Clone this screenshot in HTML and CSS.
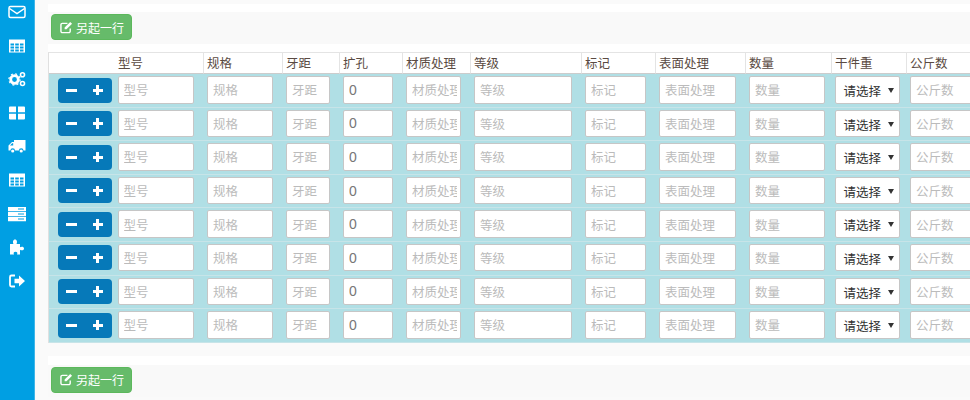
FILE: index.html
```html
<!DOCTYPE html>
<html lang="zh">
<head>
<meta charset="utf-8">
<title>订单</title>
<link rel="stylesheet" href="styles.css">
</head>
<body>
<div class="app">
  <nav class="side">
    <svg class="ic" viewBox="0 0 18 16"><rect x="1" y="2.500" width="16" height="11" rx="1.500" fill="none" stroke="#fff" stroke-width="1.500"/><path d="M1.500 4.500l7.500 5 7.500-5" fill="none" stroke="#fff" stroke-width="1.500"/></svg>
    <svg class="ic" viewBox="0 0 18 16"><path d="M1 1.500h16v13H1z M2.500 5.500v2h3.500v-2z M7.200 5.500v2h3.600v-2z M12 5.500v2h3.500v-2z M2.500 8.500v2h3.500v-2z M7.200 8.500v2h3.600v-2z M12 8.500v2h3.500v-2z M2.500 11.500v2h3.500v-2z M7.200 11.500v2h3.600v-2z M12 11.500v2h3.500v-2z" fill="#fff" fill-rule="evenodd"/></svg>
    <svg class="ic" viewBox="0 0 18 16"><circle cx="6.500" cy="8.500" r="3.800" fill="none" stroke="#fff" stroke-width="2.800"/><circle cx="6.500" cy="8.500" r="5.600" fill="none" stroke="#fff" stroke-width="1.200" stroke-dasharray="2 2.400"/><circle cx="14.500" cy="3.800" r="2" fill="none" stroke="#fff" stroke-width="1.600"/><circle cx="14.500" cy="12.500" r="2" fill="none" stroke="#fff" stroke-width="1.600"/></svg>
    <svg class="ic" viewBox="0 0 18 16"><path d="M1 2.500a1 1 0 0 1 1-1h6v5.800H1z M10 1.500h6a1 1 0 0 1 1 1v4.800h-7z M1 8.800h7v5.700H2a1 1 0 0 1-1-1z M10 8.800h7v4.700a1 1 0 0 1-1 1h-6z" fill="#fff"/></svg>
    <svg class="ic" viewBox="0 0 18 16"><path d="M6 2h11.500v10.500h-2a2.300 2.300 0 0 0-4.600 0H7a2.300 2.300 0 0 0-4.600 0H.5V7.500L4 4h2z M2 7.500h3.200V5.200H4.200z" fill="#fff" fill-rule="evenodd"/><circle cx="4.700" cy="13" r="1.600" fill="#fff"/><circle cx="13.200" cy="13" r="1.600" fill="#fff"/></svg>
    <svg class="ic" viewBox="0 0 18 16"><path d="M1 1.500h16v13H1z M2.500 5.500v2h3.500v-2z M7.200 5.500v2h3.600v-2z M12 5.500v2h3.500v-2z M2.500 8.500v2h3.500v-2z M7.200 8.500v2h3.600v-2z M12 8.500v2h3.500v-2z M2.500 11.500v2h3.500v-2z M7.200 11.500v2h3.600v-2z M12 11.500v2h3.500v-2z" fill="#fff" fill-rule="evenodd"/></svg>
    <svg class="ic" viewBox="0 0 18 16"><path d="M0 1h18v4.200H0z M0 6h18v4.200H0z M0 11h18v4.200H0z" fill="#fff"/><path d="M10 3h6M10 8h6M10 13h6" stroke="#009fe3" stroke-width="1"/></svg>
    <svg class="ic" viewBox="0 0 18 16"><path d="M2 5h3.500C4.500 3 5 .5 7 .5S9.500 3 8.500 5H12v3.200c1.500-1 4-.7 4 1.300s-2.500 2.300-4 1.300V15.500H9c.8-1.500.3-2.800-1.500-2.800S5.200 14 6 15.500H2z" fill="#fff"/></svg>
    <svg class="ic" viewBox="0 0 18 16"><path d="M7 2.500H3.500A1.500 1.500 0 0 0 2 4v8a1.500 1.500 0 0 0 1.500 1.500H7" fill="none" stroke="#fff" stroke-width="1.800"/><path d="M6.500 5.800h4.500V2.500L17 8l-6 5.500v-3.300H6.500z" fill="#fff"/></svg>
  </nav>
  <main class="content">
    <div class="band"></div>
    <div class="bar"><button class="add"><svg class="pen" viewBox="0 0 14 14"><path d="M11 8v3a1.500 1.500 0 0 1-1.500 1.500h-7A1.500 1.500 0 0 1 1 11V4a1.500 1.500 0 0 1 1.500-1.500H8" fill="none" stroke="#fff" stroke-width="1.500"/><path d="M5 7l6-6 2 2-6 6H5z" fill="#fff"/></svg>另起一行</button></div>
    <div class="band"></div>
    <div class="grid">
      <div class="h h-type">型号</div><div class="h">规格</div><div class="h">牙距</div><div class="h">扩孔</div><div class="h">材质处理</div><div class="h">等级</div><div class="h">标记</div><div class="h">表面处理</div><div class="h">数量</div><div class="h">干件重</div><div class="h">公斤数</div>

      <div class="c c-type"><span class="pm"><b class="minus"></b><b class="plus"></b></span><input class="f" placeholder="型号"></div><div class="c"><input class="f" placeholder="规格"></div><div class="c"><input class="f" placeholder="牙距"></div><div class="c"><input class="f val" value="0"></div><div class="c"><input class="f" placeholder="材质处理"></div><div class="c"><input class="f" placeholder="等级"></div><div class="c"><input class="f" placeholder="标记"></div><div class="c"><input class="f" placeholder="表面处理"></div><div class="c c-sel"><input class="f" placeholder="数量"></div><div class="c c-sel"><span class="sel">请选择<i></i></span></div><div class="c"><input class="f" placeholder="公斤数"></div>

      <div class="c c-type"><span class="pm"><b class="minus"></b><b class="plus"></b></span><input class="f" placeholder="型号"></div><div class="c"><input class="f" placeholder="规格"></div><div class="c"><input class="f" placeholder="牙距"></div><div class="c"><input class="f val" value="0"></div><div class="c"><input class="f" placeholder="材质处理"></div><div class="c"><input class="f" placeholder="等级"></div><div class="c"><input class="f" placeholder="标记"></div><div class="c"><input class="f" placeholder="表面处理"></div><div class="c c-sel"><input class="f" placeholder="数量"></div><div class="c c-sel"><span class="sel">请选择<i></i></span></div><div class="c"><input class="f" placeholder="公斤数"></div>

      <div class="c c-type"><span class="pm"><b class="minus"></b><b class="plus"></b></span><input class="f" placeholder="型号"></div><div class="c"><input class="f" placeholder="规格"></div><div class="c"><input class="f" placeholder="牙距"></div><div class="c"><input class="f val" value="0"></div><div class="c"><input class="f" placeholder="材质处理"></div><div class="c"><input class="f" placeholder="等级"></div><div class="c"><input class="f" placeholder="标记"></div><div class="c"><input class="f" placeholder="表面处理"></div><div class="c c-sel"><input class="f" placeholder="数量"></div><div class="c c-sel"><span class="sel">请选择<i></i></span></div><div class="c"><input class="f" placeholder="公斤数"></div>

      <div class="c c-type"><span class="pm"><b class="minus"></b><b class="plus"></b></span><input class="f" placeholder="型号"></div><div class="c"><input class="f" placeholder="规格"></div><div class="c"><input class="f" placeholder="牙距"></div><div class="c"><input class="f val" value="0"></div><div class="c"><input class="f" placeholder="材质处理"></div><div class="c"><input class="f" placeholder="等级"></div><div class="c"><input class="f" placeholder="标记"></div><div class="c"><input class="f" placeholder="表面处理"></div><div class="c c-sel"><input class="f" placeholder="数量"></div><div class="c c-sel"><span class="sel">请选择<i></i></span></div><div class="c"><input class="f" placeholder="公斤数"></div>

      <div class="c c-type"><span class="pm"><b class="minus"></b><b class="plus"></b></span><input class="f" placeholder="型号"></div><div class="c"><input class="f" placeholder="规格"></div><div class="c"><input class="f" placeholder="牙距"></div><div class="c"><input class="f val" value="0"></div><div class="c"><input class="f" placeholder="材质处理"></div><div class="c"><input class="f" placeholder="等级"></div><div class="c"><input class="f" placeholder="标记"></div><div class="c"><input class="f" placeholder="表面处理"></div><div class="c c-sel"><input class="f" placeholder="数量"></div><div class="c c-sel"><span class="sel">请选择<i></i></span></div><div class="c"><input class="f" placeholder="公斤数"></div>

      <div class="c c-type"><span class="pm"><b class="minus"></b><b class="plus"></b></span><input class="f" placeholder="型号"></div><div class="c"><input class="f" placeholder="规格"></div><div class="c"><input class="f" placeholder="牙距"></div><div class="c"><input class="f val" value="0"></div><div class="c"><input class="f" placeholder="材质处理"></div><div class="c"><input class="f" placeholder="等级"></div><div class="c"><input class="f" placeholder="标记"></div><div class="c"><input class="f" placeholder="表面处理"></div><div class="c c-sel"><input class="f" placeholder="数量"></div><div class="c c-sel"><span class="sel">请选择<i></i></span></div><div class="c"><input class="f" placeholder="公斤数"></div>

      <div class="c c-type"><span class="pm"><b class="minus"></b><b class="plus"></b></span><input class="f" placeholder="型号"></div><div class="c"><input class="f" placeholder="规格"></div><div class="c"><input class="f" placeholder="牙距"></div><div class="c"><input class="f val" value="0"></div><div class="c"><input class="f" placeholder="材质处理"></div><div class="c"><input class="f" placeholder="等级"></div><div class="c"><input class="f" placeholder="标记"></div><div class="c"><input class="f" placeholder="表面处理"></div><div class="c c-sel"><input class="f" placeholder="数量"></div><div class="c c-sel"><span class="sel">请选择<i></i></span></div><div class="c"><input class="f" placeholder="公斤数"></div>

      <div class="c c-type"><span class="pm"><b class="minus"></b><b class="plus"></b></span><input class="f" placeholder="型号"></div><div class="c"><input class="f" placeholder="规格"></div><div class="c"><input class="f" placeholder="牙距"></div><div class="c"><input class="f val" value="0"></div><div class="c"><input class="f" placeholder="材质处理"></div><div class="c"><input class="f" placeholder="等级"></div><div class="c"><input class="f" placeholder="标记"></div><div class="c"><input class="f" placeholder="表面处理"></div><div class="c c-sel"><input class="f" placeholder="数量"></div><div class="c c-sel"><span class="sel">请选择<i></i></span></div><div class="c"><input class="f" placeholder="公斤数"></div>
    </div>
    <div class="band band-low"></div>
    <div class="bar"><button class="add"><svg class="pen" viewBox="0 0 14 14"><path d="M11 8v3a1.500 1.500 0 0 1-1.500 1.500h-7A1.500 1.500 0 0 1 1 11V4a1.500 1.500 0 0 1 1.500-1.500H8" fill="none" stroke="#fff" stroke-width="1.500"/><path d="M5 7l6-6 2 2-6 6H5z" fill="#fff"/></svg>另起一行</button></div>
  </main>
</div>
</body>
</html>
```
FILE: styles.css
```css
* { box-sizing: border-box; }
html, body { margin: 0; height: 400px; overflow: hidden; background: #fff; }
body { font-family: "Noto Sans CJK SC", "Liberation Sans", sans-serif; font-size: 12.500px; color: #333; }
.app { display: flex; height: 400px; }
.side { width: 35px; flex: none; background: #009fe3; border-right: 1px solid #3fb5e8; display: flex; flex-direction: column; align-items: center; padding-top: 4px; gap: 17.600px; }
.ic { width: 18px; height: 16px; display: block; flex: none; }
.content { flex: none; width: 935px; height: 400px; padding: 4px 0 0 13px; background: #fafafa; overflow: hidden; }
.band { height: 8px; background: #fff; }
.band-low { height: 9px; margin-top: 13.200px; }
.bar { height: 32px; padding: 2px 0 0 3px; background: #f9f9f9; }
.add { display: flex; align-items: center; width: 81px; height: 26px; margin: 0; padding: 0 0 0 8px; border: 1px solid #5cb85c; border-radius: 4px; background: #66bb6a; color: #fff; font: 12px "Noto Sans CJK SC", sans-serif; }
.pen { width: 13px; height: 13px; margin-right: 3px; flex: none; }
.grid { display: grid; width: 930px; grid-template-columns: 155px 79px 57px 63px 68px 111px 74px 90px 86px 75px 75px; grid-template-rows: 21px repeat(8, 33.600px); background: #b0dfe5; border-top: 1px solid #e4e4e4; border-left: 1px solid #e0e0e0; }
.h { background: #fff; border-right: 1px solid #e4e4e4; border-bottom: 1px solid #ccc; padding-left: 3px; line-height: 20px; color: #5a4a42; }
.h-type { padding-left: 69px; }
.c { display: flex; align-items: flex-start; padding: 2px 10px 0 3px; border-bottom: 1px solid #c7e4e8; }
.c-type { padding-left: 8.500px; }
.c-sel { padding-right: 7px; }
.pm { display: flex; flex: none; width: 54.500px; height: 25px; margin: 1.500px 5.500px 0 0; background: #0679b9; border-radius: 4px; }
.pm b { position: relative; flex: 1; }
.minus::before, .plus::before, .plus::after { content: ""; position: absolute; background: #fff; }
.minus::before { left: 8.500px; top: 11px; width: 10.500px; height: 3px; }
.plus::before { left: 8px; top: 11px; width: 10.500px; height: 3px; }
.plus::after { left: 11.700px; top: 7.300px; width: 3px; height: 10.500px; }
.f { flex: 1; min-width: 0; width: 100%; height: 27.500px; padding: 0 3px 0 5px; border: 1px solid #c6c6c6; border-radius: 2px; background: #fff; font: 12.500px "Noto Sans CJK SC", sans-serif; color: #777; outline: 0; }
.f::placeholder { color: #bbb; opacity: 1; }
.val { font-family: "Liberation Sans", sans-serif; font-size: 14px; }
.sel { position: relative; flex: 1; height: 27.500px; padding-left: 7.500px; border: 1px solid #c6c6c6; border-radius: 2px; background: #fff; line-height: 27px; color: #333; }
.sel i { position: absolute; right: 5px; top: 11px; border: 3px solid transparent; border-top: 5px solid #333; border-bottom: 0; }
```
